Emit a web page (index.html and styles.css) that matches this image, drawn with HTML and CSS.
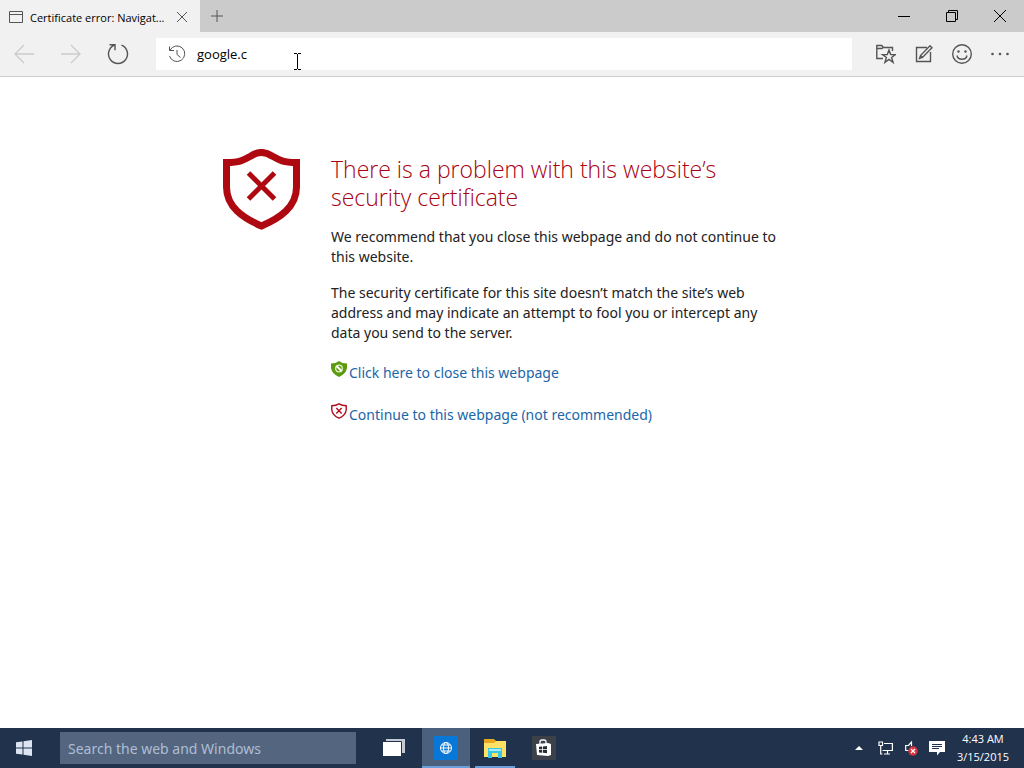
FILE: index.html
```html
<!DOCTYPE html>
<html lang="en">
<head>
    <meta charset="UTF-8">
    <meta name="viewport" content="width=device-width, initial-scale=1.0">
    <title>Certificate error: Navigation blocked</title>
    <link rel="stylesheet" href="styles.css">
</head>
<body>
    <header class="browser">
        <div class="tab-bar">
            <div class="tab">
                <svg class="tab-icon" width="14" height="12" viewBox="0 0 14 12"><path d="M.5 .5h13v11H.5zM.5 3.5h13" /></svg>
                <span class="tab-title">Certificate error: Navigat...</span>
                <button type="button" class="tab-close" aria-label="Close tab">
                    <svg width="10" height="10" viewBox="0 0 10 10"><path d="M0 0l10 10M10 0L0 10" /></svg>
                </button>
            </div>
            <button type="button" class="new-tab" aria-label="New tab">
                <svg width="12" height="12" viewBox="0 0 12 12"><path d="M6 0v12M0 6h12" /></svg>
            </button>
            <div class="window-buttons">
                <button type="button" aria-label="Minimize">
                    <svg width="12" height="12" viewBox="0 0 12 12"><path d="M0 6.5h12" /></svg>
                </button>
                <button type="button" aria-label="Restore">
                    <svg width="12" height="12" viewBox="0 0 12 12"><path d="M.5 2.5h9v9h-9zM2.5 2.5v-2h9v9h-2" /></svg>
                </button>
                <button type="button" aria-label="Close">
                    <svg width="12" height="12" viewBox="0 0 12 12"><path d="M0 0l12 12M12 0L0 12" /></svg>
                </button>
            </div>
        </div>

        <div class="toolbar">
            <div class="nav-buttons">
                <button type="button" class="disabled" aria-label="Back" disabled>
                    <svg width="20" height="20" viewBox="0 0 20 20"><path d="M10 1L1 10l9 9M1 10h19" /></svg>
                </button>
                <button type="button" class="disabled" aria-label="Forward" disabled>
                    <svg width="20" height="20" viewBox="0 0 20 20"><path d="M10 1l9 9-9 9M19 10H0" /></svg>
                </button>
                <button type="button" aria-label="Refresh">
                    <svg width="22" height="22" viewBox="0 0 22 22"><path d="M14.5 2.2A9.5 9.5 0 1 1 7.5 2.2M2.5 1.7H8v5.5" /></svg>
                </button>
            </div>
            <div class="address-bar">
                <svg width="18" height="18" viewBox="0 0 18 18"><path d="M2 5.2A7.8 7.8 0 1 1 1.5 11M1.5 1.5v4h4.5M9 5v4.5l3.5 3" /></svg>
                <input type="text" value="google.c" aria-label="Address" spellcheck="false">
                <svg class="text-cursor" width="7" height="17" viewBox="0 0 7 17"><path d="M0 .5h3M4 .5h3M3.5 1v15M0 16.5h3M4 16.5h3" /></svg>
            </div>
            <div class="tool-buttons">
                <button type="button" aria-label="Favorites">
                    <svg width="20" height="20" viewBox="0 0 20 20"><path d="M7 14.5H.8V1.5h5l1.5 2h9.2V7M.8 4.5h5l1.5-1" /><path class="star" d="M13 6l1.7 4.6h4.8l-3.9 2.9 1.5 4.9-4.1-3-4.1 3 1.5-4.9-3.9-2.9h4.8z" /></svg>
                </button>
                <button type="button" aria-label="Make a web note">
                    <svg width="18" height="18" viewBox="0 0 18 18"><path d="M12 2.5H1.5v14h14V7M15 .8l2 2L7.5 12.5 4.5 13.5l1-3zM5.5 10.5l2 2" /></svg>
                </button>
                <button type="button" aria-label="Send feedback">
                    <svg width="20" height="20" viewBox="0 0 20 20"><circle cx="10" cy="10" r="9.3" /><path d="M5 11.5c1 5 9 5 10 0" /><circle class="dot" cx="6.5" cy="7.5" r="1.2" /><circle class="dot" cx="13.5" cy="7.5" r="1.2" /></svg>
                </button>
                <button type="button" aria-label="More">
                    <svg width="20" height="4" viewBox="0 0 20 4"><circle class="dot" cx="2.5" cy="2" r="1.3" /><circle class="dot" cx="10" cy="2" r="1.3" /><circle class="dot" cx="17.5" cy="2" r="1.3" /></svg>
                </button>
            </div>
        </div>
    </header>

    <main class="page">
        <svg class="shield" width="78" height="82" viewBox="0 0 78 82">
            <path class="shield-edge" d="M3.5 13.5C17 13.5 21 11 28 7Q38.5 0 49 7C56 11 60 13.5 73.5 13.5V38C73.5 58 57 69 38.5 77C20 69 3.5 58 3.5 38Z" />
            <path class="shield-cross" d="M25.500 24l26 26M51.500 24l-26 26" />
        </svg>
        <div class="message">
            <h1>There is a problem with this website’s security certificate</h1>
            <p>We recommend that you close this webpage and do not continue to this website.</p>
            <p>The security certificate for this site doesn’t match the site’s web address and may indicate an attempt to fool you or intercept any data you send to the server.</p>
            <div class="choice">
                <svg width="16" height="16" viewBox="0 0 16 16"><path fill="#5c9a10" d="M0 2.5Q5 2.5 8 0Q11 2.5 16 2.5V7Q15 13 8 16Q1 13 0 7Z" /><circle cx="8" cy="7.5" r="3.3" fill="none" stroke="#e4f2c8" stroke-width="1.3" /><path stroke="#fff" stroke-width="2" d="M5.5 5l5 5" /></svg>
                <a href="#">Click here to close this webpage</a>
            </div>
            <div class="choice">
                <svg width="16" height="16" viewBox="0 0 16 16"><path fill="#fff" stroke="#b00d1c" stroke-width="1.4" d="M.8 2.8Q5 2.7 8 .9Q11 2.7 15.2 2.8V7Q14.5 12.5 8 15.2Q1.5 12.5 .8 7Z" /><path stroke="#b00d1c" stroke-width="1.4" d="M5.3 5l5.4 5.4M10.7 5l-5.4 5.4" /></svg>
                <a href="#">Continue to this webpage (not recommended)</a>
            </div>
        </div>
    </main>

    <footer class="taskbar">
        <button type="button" class="start" aria-label="Start">
            <svg width="16" height="16" viewBox="0 0 16 16"><path d="M0 2.3L6.5 1.4V7.5H0zM7.5 1.2L16 0V7.5H7.5zM0 8.5H6.5V14.6L0 13.7zM7.5 8.5H16V16L7.5 14.8z" /></svg>
        </button>
        <input type="text" class="search" placeholder="Search the web and Windows" aria-label="Search the web and Windows">
        <div class="apps">
            <button type="button" aria-label="Task view">
                <svg width="22" height="18" viewBox="0 0 22 18"><path fill="#c3cad4" d="M3 0h19v14H3z" /><path fill="#fff" stroke="#21324d" d="M-.5 2.5h19v15h-19z" /></svg>
            </button>
            <button type="button" class="running active" aria-label="Browser">
                <svg width="24" height="24" viewBox="0 0 24 24"><path fill="#0877d7" d="M0 0h24v24H0z" /><g fill="none" stroke="#fff"><circle cx="12" cy="12" r="5.5" /><ellipse cx="12" cy="12" rx="2.5" ry="5.5" /><path d="M6.5 12h11M7.5 9h9M7.5 15h9" /></g></svg>
            </button>
            <button type="button" class="running" aria-label="File Explorer">
                <svg width="22" height="20" viewBox="0 0 22 20"><path fill="#e9a721" d="M0 1h10l2 2h9v5H0z" /><path fill="#ffe166" d="M0 5h10l2-2h10v16H0z" /><path fill="#38c5e8" d="M4 10h14v10h-4v-5H8v5H4z" /><path fill="#a5edf8" d="M5 11h12v2H5z" /></svg>
            </button>
            <button type="button" aria-label="Store">
                <svg width="24" height="24" viewBox="0 0 24 24"><path fill="#3c4049" d="M0 0h24v24H0z" /><path fill="none" stroke="#fff" stroke-width="1.3" d="M8 8V6q0-2 2-2h2q2 0 2 2v2" /><path fill="#fff" d="M4 8l12-1 3 1v11l-3 1L5 19z" /><path fill="#282c34" d="M7 10.8l3.2-.3v2.7H7zM11 10.4l4-.4v3.200h-4zM7 14h3.200v2.8L7 16.500zM11 14h4v3.200l-4-.4z" /></svg>
            </button>
        </div>
        <div class="tray">
            <button type="button" aria-label="Show hidden icons">
                <svg width="8" height="4" viewBox="0 0 8 4"><path fill="#fff" d="M4 0l4 4H0z" /></svg>
            </button>
            <button type="button" aria-label="Network">
                <svg width="15" height="14" viewBox="0 0 15 14"><path fill="none" stroke="#fff" stroke-width="1.2" d="M6 2.5h8.4v7H4.5M1 1h3.5v3.5H1zM2.7 4.5V13h1.8M9.5 9.5V13M6 13h6" /></svg>
            </button>
            <button type="button" aria-label="Volume, muted">
                <svg width="13" height="15" viewBox="0 0 13 15"><path fill="none" stroke="#fff" stroke-width="1.2" d="M6.5 5V1L3.5 4.5H.7v5h2.8" /><circle cx="8" cy="10" r="4.7" fill="#d83440" /><path stroke="#fff" stroke-width="1.2" d="M6 8l4 4M10 8l-4 4" /></svg>
            </button>
            <button type="button" aria-label="Notifications">
                <svg width="16" height="16" viewBox="0 0 16 16"><path fill="#fff" d="M0 1h16v11h-5L8 15.5V12H0z" /><path stroke="#21324d" d="M3 4.5h10M3 6.5h10M3 8.5h7" /></svg>
            </button>
            <div class="clock">
                <span>4:43 AM</span>
                <span>3/15/2015</span>
            </div>
        </div>
    </footer>
</body>
</html>
```
FILE: styles.css
```css
* {
    box-sizing: border-box;
}

body {
    margin: 0;
    min-height: 100vh;
    display: flex;
    flex-direction: column;
    font-family: "Open Sans", "Noto Sans", sans-serif;
    background-color: #fff;
    color: #222;
}

button {
    display: flex;
    align-items: center;
    justify-content: center;
    padding: 0;
    border: none;
    background: none;
}

svg {
    display: block;
    flex-shrink: 0;
}

/* browser window */
.browser {
    background-color: #f1f1f1;
    border-bottom: 1px solid #ccc;
}

.browser svg {
    fill: none;
    stroke: #555;
}

.tab-bar {
    display: flex;
    height: 32px;
    background-color: #cbcbcb;
}

.tab {
    display: flex;
    align-items: center;
    width: 200px;
    padding: 2px 6px 0 9px;
    background-color: #f1f1f1;
}

.tab-title {
    flex: 1;
    margin-left: 7px;
    font-size: 11px;
    color: #000;
    white-space: nowrap;
}

.tab-close {
    width: 24px;
    height: 24px;
}

.new-tab {
    width: 34px;
}

.window-buttons {
    display: flex;
    margin-left: auto;
}

.window-buttons button {
    width: 48px;
}

.window-buttons svg {
    stroke: #000;
}

.toolbar {
    display: flex;
    align-items: center;
    height: 44px;
}

.nav-buttons {
    display: flex;
    width: 156px;
}

.nav-buttons button {
    width: 47px;
    height: 32px;
}

.nav-buttons svg {
    stroke-width: 1.4;
}

.nav-buttons .disabled svg {
    stroke: #ccc;
}

.address-bar {
    position: relative;
    flex: 1;
    display: flex;
    align-items: center;
    gap: 11px;
    height: 32px;
    padding-left: 12px;
    background-color: #fff;
}

.address-bar input {
    flex: 1;
    min-width: 0;
    padding: 0;
    border: none;
    outline: none;
    background: none;
    font-family: inherit;
    font-size: 13px;
    color: #000;
}

.address-bar .text-cursor {
    position: absolute;
    left: 138px;
    top: 15px;
    stroke: #000;
}

.tool-buttons {
    display: flex;
    padding: 0 5px 0 15px;
}

.tool-buttons button {
    width: 38px;
    height: 32px;
}

.tool-buttons svg {
    stroke-width: 1.4;
}

.tool-buttons .star {
    fill: #f1f1f1;
}

.tool-buttons .dot {
    fill: #555;
    stroke: none;
}

/* certificate warning */
.page {
    flex: 1;
    display: flex;
    align-items: flex-start;
    gap: 30px;
    width: 100%;
    max-width: 578px;
    margin: 0 auto;
    padding-top: 72px;
}

.shield-edge {
    fill: none;
    stroke: #ae0810;
    stroke-width: 7;
}

.shield-cross {
    stroke: #ae0810;
    stroke-width: 5;
}

.message {
    flex: 1;
    padding: 6px 16px 0 0;
    font-family: "Noto Sans", "Open Sans", sans-serif;
    font-size: 14px;
    line-height: 20px;
}

.message h1 {
    margin: 0 0 16px;
    font-family: "Open Sans", "Noto Sans", sans-serif;
    font-size: 23px;
    font-weight: 300;
    line-height: 28px;
    color: #a80010;
}

.message p {
    margin: 0 0 16px;
}

.choice {
    display: flex;
    gap: 2px;
    margin: 20px 0 22px;
}

.choice svg {
    margin-top: -2px;
}

.choice a {
    color: #1a66a8;
    text-decoration: none;
}

/* taskbar */
.taskbar {
    display: flex;
    height: 40px;
    background-color: #21324d;
    color: #fff;
}

.start {
    width: 48px;
}

.start svg {
    fill: #dce5f1;
}

.search {
    width: 296px;
    height: 32px;
    margin: 4px 14px 0 12px;
    padding: 0 8px;
    border: none;
    background-color: #53657f;
    font-family: "Noto Sans", "Open Sans", sans-serif;
    font-size: 14px;
    color: #fff;
}

.search::placeholder {
    color: #aebed3;
    opacity: 1;
}

.apps {
    display: flex;
    gap: 4px;
}

.apps button {
    width: 48px;
    border-top: 2px solid transparent;
    border-bottom: 2px solid transparent;
}

.apps .running {
    width: 40px;
    margin: 0 1px;
    border-bottom-color: #6b9fdc;
}

.apps .active {
    width: 48px;
    margin: 0;
    border-top-color: #4b607d;
    background-color: #4b607d;
}

.tray {
    display: flex;
    margin-left: auto;
    padding-right: 12px;
}

.tray button {
    width: 26px;
}

.clock {
    display: flex;
    flex-direction: column;
    justify-content: center;
    width: 58px;
    margin-left: 4px;
    font-size: 11px;
    line-height: 18px;
    text-align: center;
}
```
